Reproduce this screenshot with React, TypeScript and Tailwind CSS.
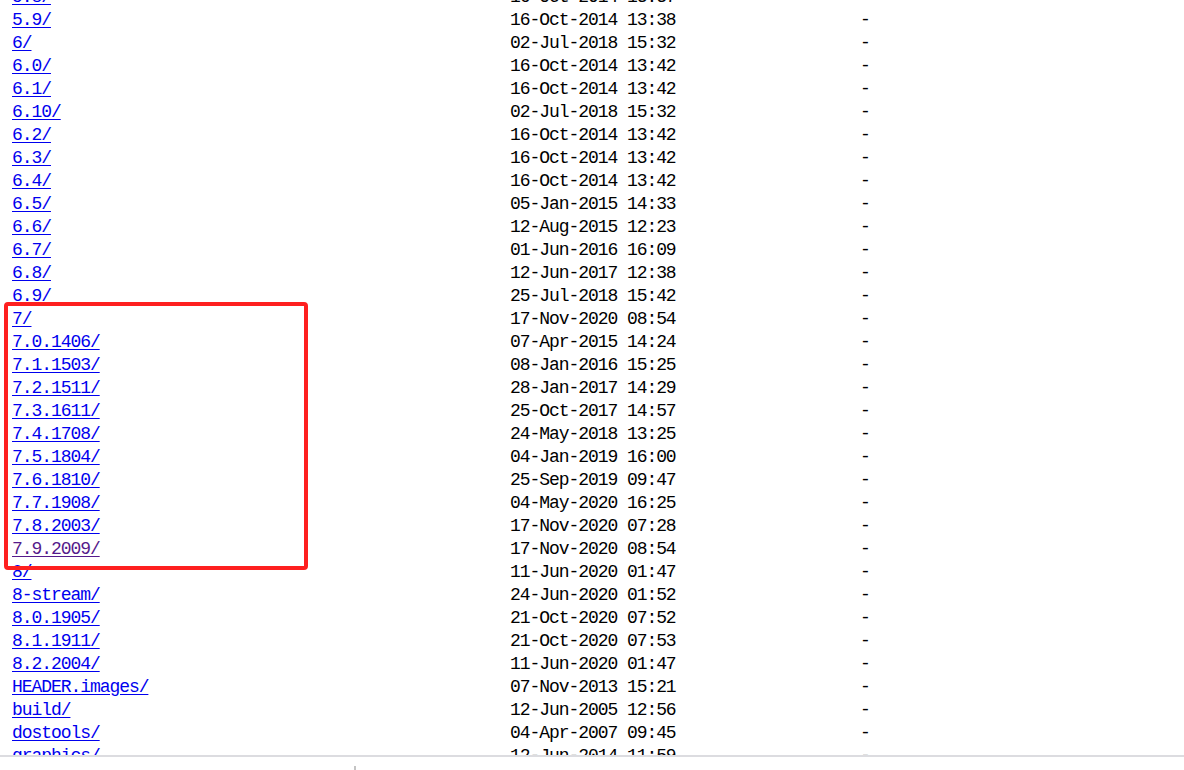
import React from "react";

const rows: [string, string, boolean?][] = [
  ["5.8/", "16-Oct-2014 13:37"],
  ["5.9/", "16-Oct-2014 13:38"],
  ["6/", "02-Jul-2018 15:32"],
  ["6.0/", "16-Oct-2014 13:42"],
  ["6.1/", "16-Oct-2014 13:42"],
  ["6.10/", "02-Jul-2018 15:32"],
  ["6.2/", "16-Oct-2014 13:42"],
  ["6.3/", "16-Oct-2014 13:42"],
  ["6.4/", "16-Oct-2014 13:42"],
  ["6.5/", "05-Jan-2015 14:33"],
  ["6.6/", "12-Aug-2015 12:23"],
  ["6.7/", "01-Jun-2016 16:09"],
  ["6.8/", "12-Jun-2017 12:38"],
  ["6.9/", "25-Jul-2018 15:42"],
  ["7/", "17-Nov-2020 08:54"],
  ["7.0.1406/", "07-Apr-2015 14:24"],
  ["7.1.1503/", "08-Jan-2016 15:25"],
  ["7.2.1511/", "28-Jan-2017 14:29"],
  ["7.3.1611/", "25-Oct-2017 14:57"],
  ["7.4.1708/", "24-May-2018 13:25"],
  ["7.5.1804/", "04-Jan-2019 16:00"],
  ["7.6.1810/", "25-Sep-2019 09:47"],
  ["7.7.1908/", "04-May-2020 16:25"],
  ["7.8.2003/", "17-Nov-2020 07:28"],
  ["7.9.2009/", "17-Nov-2020 08:54", true],
  ["8/", "11-Jun-2020 01:47"],
  ["8-stream/", "24-Jun-2020 01:52"],
  ["8.0.1905/", "21-Oct-2020 07:52"],
  ["8.1.1911/", "21-Oct-2020 07:53"],
  ["8.2.2004/", "11-Jun-2020 01:47"],
  ["HEADER.images/", "07-Nov-2013 15:21"],
  ["build/", "12-Jun-2005 12:56"],
  ["dostools/", "04-Apr-2007 09:45"],
  ["graphics/", "12-Jun-2014 11:59"],
  ["isos/", "02-Jul-2018 15:32"],
];

export default function App() {
  return (
    <div className="w-[1184px] h-[770px] bg-white flex flex-col overflow-hidden">
      <div className="relative h-[755px] overflow-hidden">
        <div
          className="mt-[-14px] pl-[12px] flex flex-col text-[18px] leading-[23px] tracking-[-1.06px] text-black"
          style={{ fontFamily: '"Liberation Mono", "DejaVu Sans Mono", monospace' }}
        >
          {rows.map(([name, date, visited]) => (
            <div key={name} className="flex h-[23px] whitespace-pre">
              <div className="w-[498px] shrink-0">
                <a
                  href="#"
                  className={
                    visited
                      ? "text-[#551a8b] underline underline-offset-[2px]"
                      : "text-[#0000ee] underline underline-offset-[2px]"
                  }
                >
                  {name}
                </a>
              </div>
              <div className="w-[350px] shrink-0">{date}</div>
              <div className="shrink-0">-</div>
            </div>
          ))}
        </div>
        <div className="absolute left-[4px] top-[302px] w-[304px] h-[268px] border-[4px] border-[#fe1f1f] rounded-[4px]" />
      </div>
      <div className="h-[2px] bg-[#dcdce0]" />
      <div className="flex-1 pl-[354px] pt-[9px]">
        <div className="w-[2px] h-[4px] bg-[#c4c4c4]" />
      </div>
    </div>
  );
}
